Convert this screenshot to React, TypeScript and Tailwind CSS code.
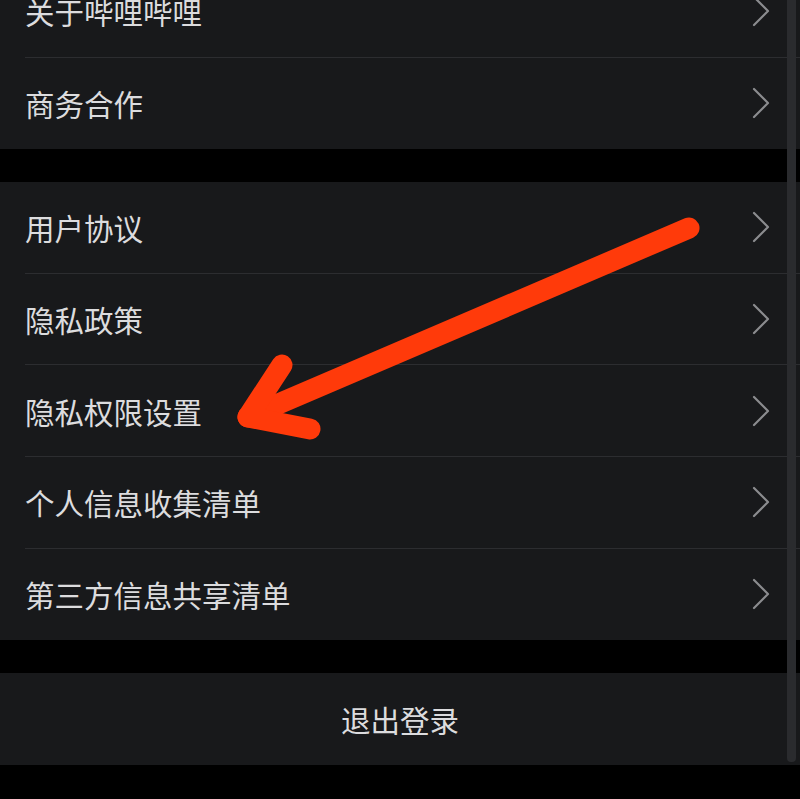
import { ChevronRight } from "lucide-react"

const groupOne = ["关于哔哩哔哩", "商务合作"]
const groupTwo = ["用户协议", "隐私政策", "隐私权限设置", "个人信息收集清单", "第三方信息共享清单"]

function Row({ label, last }: { label: string; last?: boolean }) {
  return (
    <div className="flex h-[91.6px] items-stretch pl-[25px]">
      <div
        className={
          "flex flex-1 items-center justify-between pr-[30px] " +
          (last ? "" : "border-b border-[#2c2d30]")
        }
      >
        <span className="text-[29.5px] text-[#dcdcde]">{label}</span>
        <svg width="18" height="32" viewBox="0 0 18 32" fill="none">
          <path d="M2 2 L16 16 L2 30" stroke="#8b8c8f" strokeWidth="2.2" strokeLinecap="round" strokeLinejoin="round" />
        </svg>
      </div>
    </div>
  )
}

export default function App() {
  return (
    <div
      className="relative h-[799px] w-[800px] overflow-hidden bg-black"
      style={{ fontFamily: '"Noto Sans CJK SC", "Noto Sans", sans-serif' }}
    >
      <div className="mt-[-34px] bg-[#18191b]">
        {groupOne.map((l, i) => (
          <Row key={l} label={l} last={i === groupOne.length - 1} />
        ))}
      </div>

      <div className="mt-[33px] bg-[#18191b]">
        {groupTwo.map((l, i) => (
          <Row key={l} label={l} last={i === groupTwo.length - 1} />
        ))}
      </div>

      <div className="mt-[33px] flex h-[92px] items-center justify-center bg-[#18191b]">
        <span className="text-[29.5px] text-[#dcdcde]">退出登录</span>
      </div>

      {/* scrollbar */}
      <div className="absolute right-[4px] top-0 h-[762px] w-[9px] rounded-b-sm bg-[#2a2b2e]" />

      {/* red arrow annotation */}
      <svg className="absolute left-0 top-0" width="800" height="799" viewBox="0 0 800 799">
        <g stroke="#ff3a0a" strokeWidth="21" strokeLinecap="round" strokeLinejoin="round" fill="none">
          <path d="M689 228 L248 417" />
          <path d="M282 365 L248 417 L310 429" />
        </g>
      </svg>
    </div>
  )
}
